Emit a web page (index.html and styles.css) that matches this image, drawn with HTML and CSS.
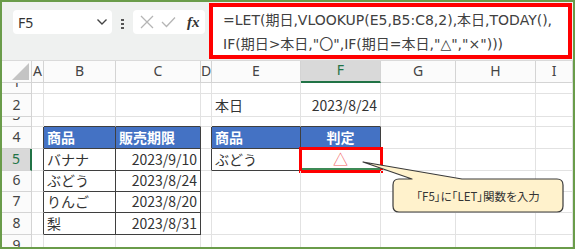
FILE: index.html
```html
<!doctype html>
<html lang="ja">
<head>
    <meta charset="UTF-8">
    <title>LET関数</title>
    <link rel="stylesheet" href="styles.css">
</head>
<body>
<div class="frame">
    <div class="fbar">
        <div class="namebox">
            <span>F5</span>
            <svg width="12" height="8" viewBox="0 0 12 8"><path d="M1.5 1.5 L6 6 L10.5 1.5" fill="none" stroke="#444" stroke-width="1.4"/></svg>
        </div>
        <div class="dots"><i></i><i></i><i></i></div>
        <div class="iconbox">
            <svg width="14" height="14" viewBox="0 0 14 14"><path d="M1 1 L13 13 M13 1 L1 13" stroke="#b5b5b5" stroke-width="1.3"/></svg>
            <svg width="15" height="12" viewBox="0 0 15 12"><path d="M1 6 L5.5 10.5 L14 1.5" fill="none" stroke="#b5b5b5" stroke-width="1.3"/></svg>
            <span class="fx">fx</span>
        </div>
        <div class="formula">
            =LET(期日,VLOOKUP(E5,B5:C8,2),本日,TODAY(),<br>
            IF(期日&gt;本日,"〇",IF(期日=本日,"△","×")))
        </div>
    </div>

    <div class="sheet">
        <!-- column headers -->
        <div class="h corner"></div>
        <div class="h">A</div>
        <div class="h">B</div>
        <div class="h">C</div>
        <div class="h">D</div>
        <div class="h">E</div>
        <div class="h sel-col">F</div>
        <div class="h">G</div>
        <div class="h">H</div>
        <div class="h">I</div>

        <!-- 1 -->
        <div class="h">1</div>
        <div></div><div></div><div></div><div></div><div></div><div></div><div></div><div></div><div></div>

        <!-- 2 -->
        <div class="h">2</div>
        <div></div><div></div><div></div><div></div>
        <div>本日</div>
        <div class="r">2023/8/24</div>
        <div></div><div></div><div></div>

        <!-- 3 -->
        <div class="h">3</div>
        <div></div><div class="tb"></div><div class="tb"></div><div></div><div class="tb"></div><div class="tb"></div><div></div><div></div><div></div>

        <!-- 4 -->
        <div class="h">4</div>
        <div class="tr"></div>
        <div class="tr tb th">商品</div>
        <div class="tr tb th">販売期限</div>
        <div class="tr"></div>
        <div class="tr tb th">商品</div>
        <div class="tr tb th m">判定</div>
        <div></div><div></div><div></div>

        <!-- 5 -->
        <div class="h sel-row">5</div>
        <div class="tr"></div>
        <div class="tr tb">バナナ</div>
        <div class="tr tb r">2023/9/10</div>
        <div class="tr"></div>
        <div class="tr tb">ぶどう</div>
        <div class="tr tb m active"><span class="tri">△</span></div>
        <div></div><div></div><div></div>

        <!-- 6 -->
        <div class="h">6</div>
        <div class="tr"></div>
        <div class="tr tb">ぶどう</div>
        <div class="tr tb r">2023/8/24</div>
        <div></div><div></div><div></div><div></div><div></div><div></div>

        <!-- 7 -->
        <div class="h">7</div>
        <div class="tr"></div>
        <div class="tr tb">りんご</div>
        <div class="tr tb r">2023/8/20</div>
        <div></div><div></div><div></div><div></div><div></div><div></div>

        <!-- 8 -->
        <div class="h">8</div>
        <div class="tr"></div>
        <div class="tr tb">梨</div>
        <div class="tr tb r">2023/8/31</div>
        <div></div><div></div><div></div><div></div><div></div><div></div>

        <!-- 9 -->
        <div class="h top">9</div>
        <div></div><div></div><div></div><div></div><div></div><div></div><div></div><div></div><div></div>
    </div>

    <svg class="balloon" width="571" height="245" viewBox="2 2 571 245">
        <path d="M399 179 H412 L363 162 L462 179 H557 Q563 179 563 185 V206 Q563 212 557 212 H399 Q393 212 393 206 V185 Q393 179 399 179 Z"
              fill="#fff2cc" stroke="#3a3a3a" stroke-width="1.2" stroke-linejoin="round"/>
    </svg>
    <div class="balloon-text">「F5」に「LET」関数を入力</div>
</div>
</body>
</html>
```

FILE: styles.css
```css
* {
    padding: 0;
    margin: 0;
    box-sizing: border-box;
}

body {
    font-family: "Noto Sans CJK JP", "Noto Sans", sans-serif;
    color: #333;
    background: #fff;
}

.frame {
    width: 575px;
    height: 249px;
    border: 2px solid #6a9c4a;
    position: relative;
    display: flex;
    flex-direction: column;
    overflow: hidden;
}

/* formula bar */
.fbar {
    height: 59px;
    flex: none;
    background: #eff1f0;
    display: flex;
    align-items: flex-start;
    border-bottom: 1px solid #dadada;
}

.namebox {
    margin: 8px 0 0 11px;
    width: 99px;
    height: 24px;
    background: #fff;
    border-radius: 4px;
    display: flex;
    align-items: center;
    justify-content: space-between;
    padding: 0 4px 0 5px;
    font-family: "Noto Sans", sans-serif;
    font-size: 14px;
}

.dots {
    margin: 17px 0 0 9px;
    width: 3px;
    display: flex;
    flex-direction: column;
    gap: 2px;
}

.dots i {
    width: 3px;
    height: 2px;
    background: #555;
}

.iconbox {
    margin: 8px 0 0 9px;
    width: 72px;
    height: 24px;
    background: #fff;
    border-radius: 4px;
    display: flex;
    align-items: center;
    gap: 7px;
    padding-left: 7px;
}

.fx {
    font-family: "Liberation Serif", serif;
    font-style: italic;
    font-weight: bold;
    font-size: 15px;
    color: #333;
    margin-left: 4px;
}

.formula {
    flex: 1;
    margin: 1px 1px 0 4px;
    height: 56px;
    border: 4px solid #f00;
    background: #fff;
    padding: 1px 0 0 10px;
    font-family: "DejaVu Sans", "Noto Sans CJK JP", sans-serif;
    font-size: 14px;
    line-height: 24px;
    white-space: nowrap;
    color: #404040;
}

/* sheet grid */
.sheet {
    flex: 1;
    display: grid;
    grid-template-columns: 30px 12px 72px 85px 11px 89px 80px 75px 80px 1fr;
    grid-template-rows: 22px 11px 23px 10px 22px 22px 21px 21px 22px 1fr;
}

.sheet > div {
    border-right: 1px solid #e2e2e2;
    border-bottom: 1px solid #e2e2e2;
    overflow: hidden;
    display: flex;
    align-items: flex-end;
    padding: 0 3px 1px;
    font-size: 14px;
    line-height: 20px;
    white-space: nowrap;
    color: #333;
}

.sheet > .h {
    justify-content: center;
    background: #fbfbfb;
    border-color: #d4d4d4;
    font-family: "Noto Sans", sans-serif;
    font-size: 14px;
    color: #444;
    padding: 0 0 1px;
}

.sheet > .h.top {
    align-items: flex-start;
}

.sheet > .corner {
    position: relative;
}

.corner:after {
    content: "";
    position: absolute;
    right: 2px;
    bottom: 2px;
    border-style: solid;
    border-width: 0 0 17px 17px;
    border-color: transparent transparent #c4c4c4 transparent;
}

.sheet > .sel-col {
    background: #d9d9d9;
    color: #217346;
    border-bottom: 2px solid #217346;
}

.sheet > .sel-row {
    background: #d9d9d9;
    color: #217346;
    border-right: 2px solid #217346;
}

.sheet > .tr {
    border-right-color: #3f3f3f;
}

.sheet > .tb {
    border-bottom-color: #3f3f3f;
}

.sheet > .th {
    background: #4472c4;
    color: #fff;
    font-weight: bold;
}

.sheet > .r {
    justify-content: flex-end;
}

.sheet > .m {
    justify-content: center;
}

.sheet > .active {
    outline: 3px solid #f00;
    outline-offset: -1px;
    box-shadow: inset 0 -2px 0 #3d8a55;
}

.tri {
    color: #f25a5a;
    font-size: 15px;
}

/* callout */
.balloon {
    position: absolute;
    left: 0;
    top: 0;
    pointer-events: none;
}

.balloon-text {
    position: absolute;
    left: 391px;
    top: 177px;
    width: 170px;
    height: 33px;
    display: flex;
    align-items: center;
    justify-content: center;
    font-size: 11.5px;
    font-feature-settings: "palt";
    color: #333;
}
```
